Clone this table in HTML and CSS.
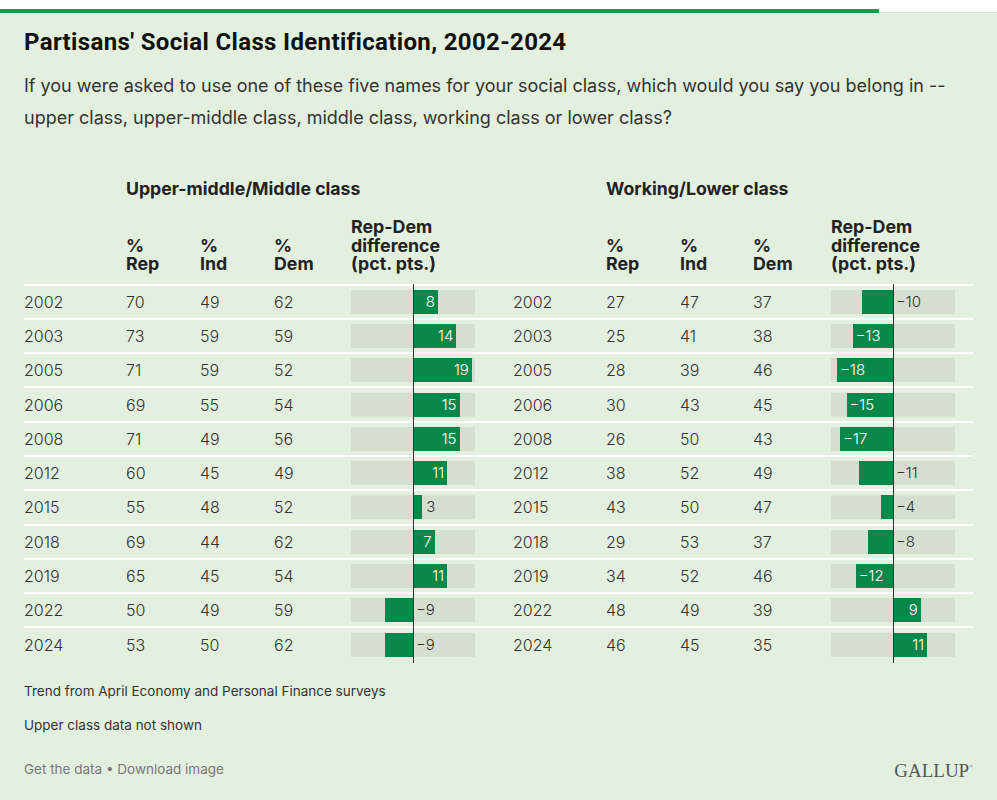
FILE: index.html
```html
<!DOCTYPE html>
<html lang="en">
<head>
<meta charset="utf-8">
<title>Partisans' Social Class Identification, 2002-2024</title>
<link rel="stylesheet" href="styles.css">
</head>
<body>
<div class="top"><div class="accent"></div><div class="rest"></div></div>
<main class="page">
  <h1 class="title">Partisans' Social Class Identification, 2002-2024</h1>
  <p class="subtitle">If you were asked to use one of these five names for your social class, which would you say you belong in -- upper class, upper-middle class, middle class, working class or lower class?</p>

  <div class="table">
    <div class="group g1">Upper-middle/Middle class</div>
    <div class="group g2">Working/Lower class</div>

    <div class="hrow">
      <div></div>
      <div class="ch">%<br>Rep</div>
      <div class="ch">%<br>Ind</div>
      <div class="ch">%<br>Dem</div>
      <div class="ch">Rep-Dem<br>difference<br>(pct. pts.)</div>
      <div></div>
      <div class="ch">%<br>Rep</div>
      <div class="ch">%<br>Ind</div>
      <div class="ch">%<br>Dem</div>
      <div class="ch">Rep-Dem<br>difference<br>(pct. pts.)</div>
    </div>

    <div class="row">
      <div class="yr">2002</div><div>70</div><div>49</div><div>62</div>
      <div class="diff"><div class="track"><div class="bar pos" style="left:62px;width:24.8px"><span class="in">8</span></div><div class="zero"></div></div></div>
      <div class="yr">2002</div><div>27</div><div>47</div><div>37</div>
      <div class="diff"><div class="track"><div class="bar neg" style="left:31px;width:31px"></div><div class="zero"></div><span class="out-n">−10</span></div></div>
    </div>
    <div class="row">
      <div class="yr">2003</div><div>73</div><div>59</div><div>59</div>
      <div class="diff"><div class="track"><div class="bar pos" style="left:62px;width:43.4px"><span class="in">14</span></div><div class="zero"></div></div></div>
      <div class="yr">2003</div><div>25</div><div>41</div><div>38</div>
      <div class="diff"><div class="track"><div class="bar neg" style="left:21.7px;width:40.3px"><span class="in">−13</span></div><div class="zero"></div></div></div>
    </div>
    <div class="row">
      <div class="yr">2005</div><div>71</div><div>59</div><div>52</div>
      <div class="diff"><div class="track"><div class="bar pos" style="left:62px;width:58.9px"><span class="in">19</span></div><div class="zero"></div></div></div>
      <div class="yr">2005</div><div>28</div><div>39</div><div>46</div>
      <div class="diff"><div class="track"><div class="bar neg" style="left:6.2px;width:55.8px"><span class="in">−18</span></div><div class="zero"></div></div></div>
    </div>
    <div class="row">
      <div class="yr">2006</div><div>69</div><div>55</div><div>54</div>
      <div class="diff"><div class="track"><div class="bar pos" style="left:62px;width:46.5px"><span class="in">15</span></div><div class="zero"></div></div></div>
      <div class="yr">2006</div><div>30</div><div>43</div><div>45</div>
      <div class="diff"><div class="track"><div class="bar neg" style="left:15.5px;width:46.5px"><span class="in">−15</span></div><div class="zero"></div></div></div>
    </div>
    <div class="row">
      <div class="yr">2008</div><div>71</div><div>49</div><div>56</div>
      <div class="diff"><div class="track"><div class="bar pos" style="left:62px;width:46.5px"><span class="in">15</span></div><div class="zero"></div></div></div>
      <div class="yr">2008</div><div>26</div><div>50</div><div>43</div>
      <div class="diff"><div class="track"><div class="bar neg" style="left:9.3px;width:52.7px"><span class="in">−17</span></div><div class="zero"></div></div></div>
    </div>
    <div class="row">
      <div class="yr">2012</div><div>60</div><div>45</div><div>49</div>
      <div class="diff"><div class="track"><div class="bar pos" style="left:62px;width:34.1px"><span class="in">11</span></div><div class="zero"></div></div></div>
      <div class="yr">2012</div><div>38</div><div>52</div><div>49</div>
      <div class="diff"><div class="track"><div class="bar neg" style="left:27.9px;width:34.1px"></div><div class="zero"></div><span class="out-n">−11</span></div></div>
    </div>
    <div class="row">
      <div class="yr">2015</div><div>55</div><div>48</div><div>52</div>
      <div class="diff"><div class="track"><div class="bar pos" style="left:62px;width:9.3px"></div><div class="zero"></div><span class="out-p" style="left:75.3px">3</span></div></div>
      <div class="yr">2015</div><div>43</div><div>50</div><div>47</div>
      <div class="diff"><div class="track"><div class="bar neg" style="left:49.6px;width:12.4px"></div><div class="zero"></div><span class="out-n">−4</span></div></div>
    </div>
    <div class="row">
      <div class="yr">2018</div><div>69</div><div>44</div><div>62</div>
      <div class="diff"><div class="track"><div class="bar pos" style="left:62px;width:21.7px"><span class="in">7</span></div><div class="zero"></div></div></div>
      <div class="yr">2018</div><div>29</div><div>53</div><div>37</div>
      <div class="diff"><div class="track"><div class="bar neg" style="left:37.2px;width:24.8px"></div><div class="zero"></div><span class="out-n">−8</span></div></div>
    </div>
    <div class="row">
      <div class="yr">2019</div><div>65</div><div>45</div><div>54</div>
      <div class="diff"><div class="track"><div class="bar pos" style="left:62px;width:34.1px"><span class="in">11</span></div><div class="zero"></div></div></div>
      <div class="yr">2019</div><div>34</div><div>52</div><div>46</div>
      <div class="diff"><div class="track"><div class="bar neg" style="left:24.8px;width:37.2px"><span class="in">−12</span></div><div class="zero"></div></div></div>
    </div>
    <div class="row">
      <div class="yr">2022</div><div>50</div><div>49</div><div>59</div>
      <div class="diff"><div class="track"><div class="bar neg" style="left:34.1px;width:27.9px"></div><div class="zero"></div><span class="out-n">−9</span></div></div>
      <div class="yr">2022</div><div>48</div><div>49</div><div>39</div>
      <div class="diff"><div class="track"><div class="bar pos" style="left:62px;width:27.9px"><span class="in">9</span></div><div class="zero"></div></div></div>
    </div>
    <div class="row">
      <div class="yr">2024</div><div>53</div><div>50</div><div>62</div>
      <div class="diff"><div class="track"><div class="bar neg" style="left:34.1px;width:27.9px"></div><div class="zero"></div><span class="out-n">−9</span></div></div>
      <div class="yr">2024</div><div>46</div><div>45</div><div>35</div>
      <div class="diff"><div class="track"><div class="bar pos" style="left:62px;width:34.1px"><span class="in">11</span></div><div class="zero"></div></div></div>
    </div>
  </div>

  <p class="note first">Trend from April Economy and Personal Finance surveys</p>
  <p class="note">Upper class data not shown</p>

  <div class="foot">
    <div class="links">Get the data • Download image</div>
    <div class="logo">GALLUP<sup>®</sup></div>
  </div>
</main>
</body>
</html>
```

FILE: styles.css
```css
* { box-sizing: border-box; }
html, body { margin: 0; padding: 0; }
body {
  background: #e3f0e0;
  color: #333;
  font-family: Inter, "Liberation Sans", sans-serif;
  width: 997px;
  height: 800px;
  overflow: hidden;
}
.top {
  background: #fff;
  padding-top: 9px;
  display: flex;
}
.top .accent { width: 879px; height: 4px; background: #00a14b; }
.top .rest { flex: 1; height: 4px; border-bottom: 1px solid #dcdcdc; }

.page { padding: 0 24px; }

.title {
  margin: 15px 0 0;
  font-family: Roboto, "Liberation Sans", sans-serif;
  font-weight: 700;
  font-size: 24px;
  line-height: 28px;
  letter-spacing: 0.35px;
  color: #111;
}
.subtitle {
  margin: 14px 0 0;
  font-size: 18px;
  line-height: 32px;
  color: #333;
}

.table {
  margin-top: 44px;
  display: grid;
  grid-template-columns: 102px 74px 74px 77px 162px 93px 74px 73px 78px 142px;
}
.group {
  font-weight: 700;
  font-size: 17.7px;
  line-height: 22px;
  color: #222;
}
.g1 { grid-column: 2 / 6; grid-row: 1; }
.g2 { grid-column: 7 / 11; grid-row: 1; }

.hrow, .row {
  grid-column: 1 / -1;
  display: grid;
  grid-template-columns: subgrid;
}
.hrow {
  margin-top: 18px;
  padding-bottom: 10px;
  align-items: end;
}
.ch {
  font-weight: 700;
  font-size: 17.8px;
  line-height: 18.5px;
  color: #222;
}
.row {
  height: 34.3px;
  border-top: 2px solid #fff;
  align-items: center;
  font-size: 16px;
  font-weight: 300;
  color: #333;
}
.row > div { line-height: 20px; }

.diff { align-self: stretch; display: flex; align-items: center; }
.track {
  position: relative;
  width: 124px;
  height: 24px;
  background: #d4dfd0;
}
.bar {
  position: absolute;
  top: 0;
  height: 24px;
  background: #07884a;
  display: flex;
  align-items: center;
}
.bar.pos { justify-content: flex-end; padding-right: 3px; }
.bar.neg { justify-content: flex-start; padding-left: 3px; }
.in {
  color: #fff;
  font-size: 15px;
  font-weight: 300;
  line-height: 24px;
}
.zero {
  position: absolute;
  left: 62px;
  top: -6px;
  bottom: -6px;
  width: 1px;
  background: #333;
}
.out-n, .out-p {
  position: absolute;
  top: 0;
  font-size: 15px;
  font-weight: 300;
  line-height: 24px;
  color: #333;
}
.out-n { left: 65px; }

.note {
  margin: 0;
  font-size: 13.5px;
  line-height: 20px;
  color: #333;
}
.note.first { margin-top: 20px; }
.note + .note { margin-top: 14px; }

.foot {
  margin-top: 22px;
  display: flex;
  justify-content: space-between;
  align-items: center;
}
.links {
  font-size: 13.5px;
  line-height: 20px;
  color: #777;
}
.logo {
  font-family: "Liberation Serif", "DejaVu Serif", serif;
  font-size: 19px;
  color: #555;
  line-height: 20px;
}
.logo sup { font-size: 5px; vertical-align: 9px; }
```
